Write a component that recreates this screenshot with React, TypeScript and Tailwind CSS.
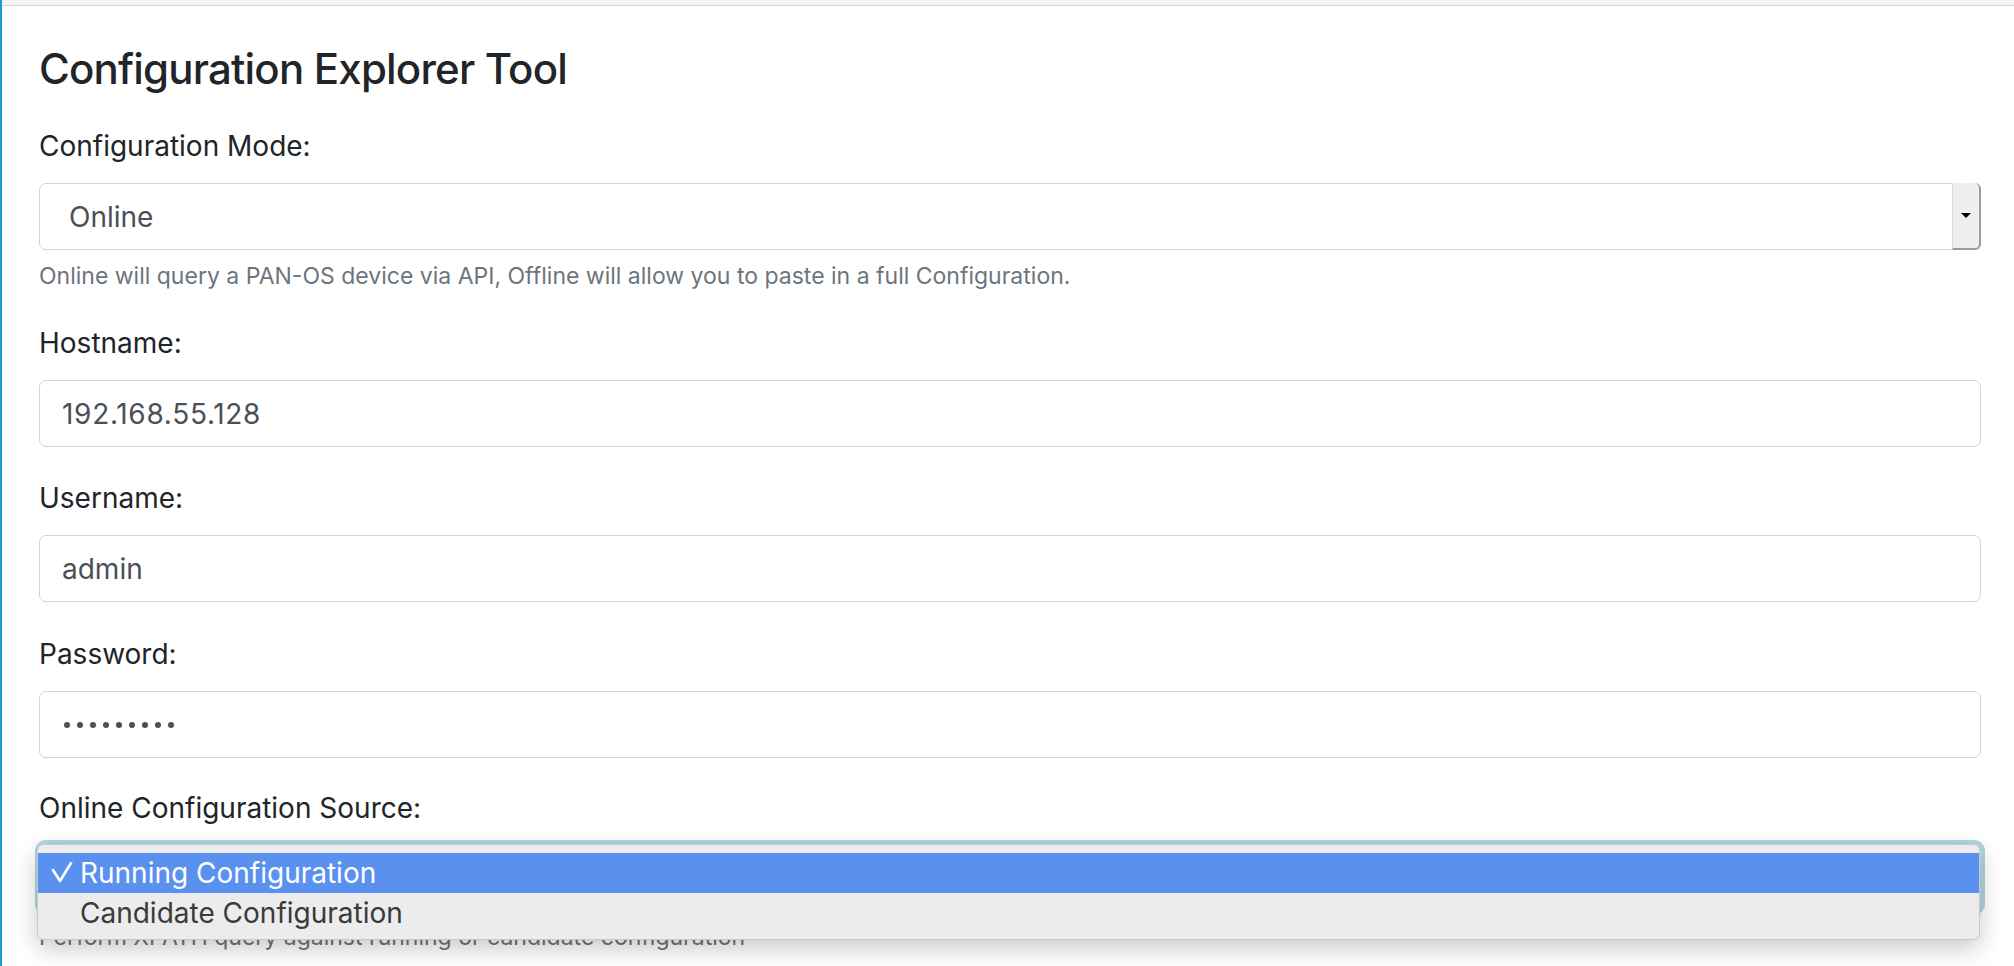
import React from 'react'

const font = { fontFamily: 'Inter, "Noto Sans", sans-serif' }

const Label = ({ text }: { text: string }) => (
    <div className="text-[28px] leading-[40px] text-[#212529] mb-[17px]">{text}</div>
)

const Help = ({ text }: { text: string }) => (
    <div className="mt-[10px] text-[23px] leading-[32px] text-[#6c757d]">{text}</div>
)

const TextBox = ({ children }: { children: React.ReactNode }) => (
    <div className="h-[67px] flex items-center pl-[22px] border border-[#ced4da] rounded-[7px] bg-white text-[28px] text-[#495057]">
        {children}
    </div>
)

const CheckIcon = () => (
    <svg width="22" height="22" viewBox="0 0 22 22" className="shrink-0">
        <polyline points="2,8 9,19 20,1" fill="none" stroke="#fff" strokeWidth="2.6" strokeLinecap="round" strokeLinejoin="round" />
    </svg>
)

export default function App() {
    return (
        <div style={font} className="min-h-[966px] bg-white border-l-2 border-[#1f9ad6]">
            <div className="h-[6px] bg-[#f5f5f5] border-b border-[#d6d6d6]" />
            <div className="pl-[37px] pr-[33px] pt-[37px]">
                <h3 className="text-[42px] leading-[52px] font-medium tracking-[-0.8px] text-[#212529]">Configuration Explorer Tool</h3>

                {/* mode */}
                <div className="mt-[31px] mb-[31px]">
                    <Label text="Configuration Mode:" />
                    <div className="h-[67px] flex border border-[#ced4da] rounded-[7px] bg-white">
                        <div className="flex-1 flex items-center pl-[29px] text-[28px] text-[#495057]">Online</div>
                        <div className="w-[29px] -my-px -mr-px flex items-center justify-center bg-[#efefef] border-l border-[#d8d8d8] border-r-2 border-b-2 border-r-[#9c9c9c] border-b-[#9c9c9c] rounded-r-[6px]">
                            <div className="w-0 h-0 border-l-[5px] border-r-[5px] border-t-[5px] border-l-transparent border-r-transparent border-t-black" />
                        </div>
                    </div>
                    <Help text="Online will query a PAN-OS device via API, Offline will allow you to paste in a full Configuration." />
                </div>

                <div className="mb-[31px]">
                    <Label text="Hostname:" />
                    <TextBox><span className="tracking-[0.7px]">192.168.55.128</span></TextBox>
                </div>

                <div className="mb-[32px]">
                    <Label text="Username:" />
                    <TextBox>admin</TextBox>
                </div>

                <div className="mb-[30px]">
                    <Label text="Password:" />
                    <TextBox>
                        <div className="flex gap-[7px] pl-[2px]">
                            {Array.from({ length: 9 }).map((_, i) => (
                                <span key={i} className="w-[6px] h-[6px] rounded-full bg-[#495057]" />
                            ))}
                        </div>
                    </TextBox>
                </div>

                <div>
                    <div className="text-[28px] leading-[40px] text-[#212529] mb-[16px]">Online Configuration Source:</div>
                    <div className="relative">
                        <div className="h-[67px] border border-[#ced4da] rounded-[7px] bg-white ring-4 ring-[#aed6e3]" />
                        {/* open dropdown list */}
                        <div className="absolute -left-[2px] right-[1px] top-0 pt-[8px] pb-[6px] bg-[#ececec] border border-[#c9c9c9] rounded-[6px] shadow-[0_8px_24px_rgba(0,0,0,0.22)] z-10">
                            <div className="h-[40px] flex items-center bg-[#5b91ee] text-white text-[28px]">
                                <div className="w-[42px] flex justify-end pr-[7px]"><CheckIcon /></div>
                                <span>Running Configuration</span>
                            </div>
                            <div className="h-[40px] flex items-center text-[#3a3a3a] text-[28px]">
                                <div className="w-[42px]" />
                                <span>Candidate Configuration</span>
                            </div>
                        </div>
                    </div>
                    <Help text="Perform XPATH query against running or candidate configuration" />
                </div>
            </div>
        </div>
    )
}
